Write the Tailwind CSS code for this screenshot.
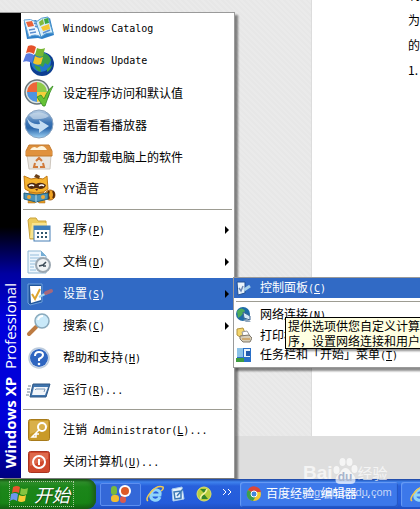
<!DOCTYPE html>
<html lang="zh-CN">
  <head>
    <meta charset="UTF-8" />
    <meta name="viewport" content="width=device-width, initial-scale=1.0" />
    <title>Windows XP</title>
    <script src="https://cdn.jsdelivr.net/npm/@tailwindcss/browser@4"></script>
  </head>
  <body
    class="h-screen flex flex-col overflow-hidden text-[12px] leading-4 text-black font-['Liberation_Sans','Noto_Sans_CJK_SC',sans-serif]"
  >
    <main class="relative flex-1 flex flex-col min-h-0 overflow-hidden bg-[#dedede]">
      <!-- editor page behind the menus -->
      <div class="flex-1 flex min-h-0">
        <div
          class="w-[312px] shrink-0 border-r border-[#dcdcdc] bg-[repeating-linear-gradient(45deg,#e7e7e7_0_2px,#eaeaea_2px_4px)]"
        ></div>
        <div class="flex-1 bg-white pl-24 overflow-hidden whitespace-nowrap leading-[25px] font-['Noto_Sans_CJK_SC',sans-serif]">
          <p class="-mt-[18px]">制,</p>
          <p>为了</p>
          <p>的时</p>
          <p>1.</p>
        </div>
      </div>
      <div class="h-[43px] shrink-0"></div>

      <!-- start menu -->
      <nav
        class="absolute left-0 bottom-px w-[235px] flex bg-white border-t border-r border-[#9a9a9a] shadow-[3px_3px_2px_rgba(0,0,0,0.45)]"
      >
        <div
          class="w-[21px] shrink-0 flex items-end pb-[10px] bg-[linear-gradient(to_bottom,#000_46%,#0000a0_56%,#0000dc_66%,#0000d8_88%,#000080_100%)]"
        >
          <span
            class="rotate-180 [writing-mode:vertical-rl] text-white text-[15px] leading-[21px] whitespace-nowrap font-['Open_Sans',sans-serif]"
          ><b>Windows XP</b>&nbsp; Professional</span>
        </div>

        <div class="flex-1">
          <button class="flex w-full h-8 items-center gap-[6px] text-left">
            <svg class="w-9 h-8 shrink-0" viewBox="0 0 36 32">
              <path d="M3 9L15 7l3 3 11-5 4 17-12 4-4-1-11 1z" fill="#2f80c8" />
              <path d="M3 7Q10 5 15 9L20 24Q14 20 8 24z" fill="#eef7ff" stroke="#66a5d8" />
              <path d="M15 9Q20 4 27 4L32 20Q25 19 20 24z" fill="#d6eefc" stroke="#549bcc" />
              <path d="M5 9l6-1 2 5-6 1z" fill="#e9633b" />
              <path d="M8 17l6-1M9 20l6-1M13 10l2 1M14 13l2 1M22 20l7-3" stroke="#5b8fd0" stroke-width="1.5" />
              <path d="M18 9l4-3 1 5-4 2z" fill="#84b93a" />
              <path d="M23 6l4-1 1 5-4 1z" fill="#3ea83f" />
              <path d="M20 14l8-3 1 5-7 2z" fill="#f5c631" />
            </svg>
            <span class="font-['DejaVu_Sans_Mono',monospace] text-[10px]">Windows Catalog</span>
          </button>
          <button class="flex w-full h-8 items-center gap-[6px] text-left">
            <svg class="w-9 h-8 shrink-0" viewBox="0 0 36 32">
              <circle cx="21" cy="19" r="12" fill="#0e3f92" />
              <circle cx="20" cy="17" r="10" fill="#2277cc" />
              <path d="M22 8q6 1 8 7l-3 5-3-2-2 4-4-2 1-5zM13 20l6 2 1 5q-5-1-7-7zM26 24l5-4q-1 5-5 7z" fill="#3da046" />
              <path d="M7 1q4-2 8 1l-2 7q-4-3-8-1z" fill="#e5512a" />
              <path d="M16 3q4 2 8 0l-2 8q-4 2-8-1z" fill="#78b833" />
              <path d="M5 9q4-2 8 1l-2 8q-5-3-9-1z" fill="#5879df" />
              <path d="M14 11q4 3 8 1l-2 7q-4 2-8-1z" fill="#f4c52b" />
            </svg>
            <span class="font-['DejaVu_Sans_Mono',monospace] text-[10px]">Windows Update</span>
          </button>
          <button class="flex w-full h-8 items-center gap-[6px] text-left">
            <svg class="w-9 h-8 shrink-0" viewBox="0 0 36 32">
              <circle cx="16" cy="15" r="12" fill="#dfe6e4" stroke="#67757a" stroke-width="1.5" />
              <path d="M16 15V5a10 10 0 0 0-10 10z" fill="#ed6639" />
              <path d="M16 15V5a10 10 0 0 1 10 10z" fill="#8fcb4a" />
              <path d="M16 15v10a10 10 0 0 1-10-10z" fill="#4d94e0" />
              <path d="M16 15v10a10 10 0 0 0 10-10z" fill="#f5cf3b" />
              <path d="M16 20l4-2 3 4q4-10 9-13-4 7-8 20h-2z" fill="#66c236" stroke="#328b1d" stroke-width=".8" />
            </svg>
            <span class="font-['Noto_Sans_CJK_SC',sans-serif]">设定程序访问和默认值</span>
          </button>
          <button class="flex w-full h-8 items-center gap-[6px] text-left">
            <svg class="w-9 h-8 shrink-0" viewBox="0 0 36 32">
              <defs>
                <linearGradient id="ball" x2="0" y2="1">
                  <stop stop-color="#b9d0e6" />
                  <stop offset=".45" stop-color="#3c74b4" />
                  <stop offset=".65" stop-color="#2a66ab" />
                  <stop offset="1" stop-color="#9fd3f5" />
                </linearGradient>
              </defs>
              <circle cx="18" cy="15" r="14" fill="url(#ball)" stroke="#8ba4c0" />
              <path d="M6 9Q10 16 19 15L18 11 28 17 18 24 18 20Q8 20 6 9z" fill="#c3dcf2" />
              <path d="M8 6Q18 0 28 7 22 11 12 10z" fill="#d5e2ef" opacity=".6" />
            </svg>
            <span class="font-['Noto_Sans_CJK_SC',sans-serif]">迅雷看看播放器</span>
          </button>
          <button class="flex w-full h-8 items-center gap-[6px] text-left">
            <svg class="w-9 h-8 shrink-0" viewBox="0 0 36 32">
              <path d="M6 14h24l-1 14H8z" fill="#e9e6e1" stroke="#cdc6bd" />
              <path d="M8 4h20l3 6v5H5v-5z" fill="#dc8f3c" stroke="#c47a2c" />
              <path d="M9 9q3-5 7-2 6-5 10 2z" fill="#fff4dc" />
              <path d="M5 10h26v4H5z" fill="#e0913d" />
              <path d="M15 20l3-3 3 3M22 22l1 4h-4M17 26h-4l1-4" fill="none" stroke="#d17a3a" stroke-width="2" />
            </svg>
            <span class="font-['Noto_Sans_CJK_SC',sans-serif]">强力卸载电脑上的软件</span>
          </button>
          <button class="flex w-full h-8 items-center gap-[6px] text-left">
            <svg class="w-9 h-8 shrink-0" viewBox="0 0 36 32">
              <circle cx="29" cy="22" r="5" fill="#f0a423" stroke="#a5651b" />
              <path d="M28 18q-2 4 0 8M32 18q2 4 0 7" stroke="#5b2d0b" stroke-width="2" fill="none" />
              <path d="M8 19h15l1 11h-6l-2-2-2 2H7z" fill="#e69a20" stroke="#a5651b" stroke-width=".5" />
              <path d="M3 3l7 3q6-2 12 0l4-3 1 13q-4 4-11 4T4 16z" fill="#f6b32e" stroke="#c17a17" />
              <path d="M6 12q4-4 9-1 5-3 10 1-1 4-6 4l-4-1-4 1q-4 0-5-4z" fill="#512a12" />
              <path d="M8 13q3-2 5 0M18 13q3-2 5 0" stroke="#fff" stroke-width="1.5" fill="none" />
              <path d="M14 16h3l-1 2z" fill="#6b2d12" />
              <path d="M3 20l12 2 12-2v6l-12 3-12-3z" fill="#4b93b8" stroke="#23617f" />
              <path d="M15 22v7" stroke="#b8dbe8" />
              <circle cx="8" cy="24" r="2" fill="#f0aa35" />
              <circle cx="22" cy="24" r="2" fill="#f0aa35" />
              <path d="M13 4l2-3 4 2-1 3z" fill="#6b421b" />
            </svg>
            <span class="font-['Noto_Sans_CJK_SC',sans-serif]"><span class="font-['DejaVu_Sans_Mono',monospace] text-[10px]">YY</span>语音</span>
          </button>

          <hr class="mt-1 mb-1 mx-[2px] border-[#9d9c92]" />

          <button class="flex w-full h-8 items-center gap-[6px] text-left">
            <svg class="w-9 h-8 shrink-0" viewBox="0 0 36 32">
              <path d="M7 6l2-2h6l2 3h8v18H9z" fill="#eccb5c" stroke="#c8a13c" />
              <path d="M11 9h15v15H9z" fill="#f8e38e" />
              <rect x="13" y="12" width="16" height="15" fill="#fff" stroke="#467eb5" />
              <path d="M13 12h16v4H13z" fill="#3e7fbd" />
              <path d="M16 19h2M20 19h2M24 19h2M16 23h2M20 23h2M24 23h2" stroke="#31576f" stroke-width="2" />
            </svg>
            <span class="flex-1 font-['Noto_Sans_CJK_SC',sans-serif]">程序<span class="font-['DejaVu_Sans_Mono',monospace] text-[10px]">(<u>P</u>)</span></span>
            <svg class="w-1 h-2 mr-[5px]" viewBox="0 0 4 8"><path d="M0 0l4 4-4 4z" /></svg>
          </button>
          <button class="flex w-full h-8 items-center gap-[6px] text-left">
            <svg class="w-9 h-8 shrink-0" viewBox="0 0 36 32">
              <path d="M7 5h13l5 5v17H7z" fill="#edf6fd" stroke="#8eb6d3" />
              <path d="M20 5v5h5z" fill="#75aed6" />
              <path d="M9 9h9M9 12h12M9 15h8M9 18h5M9 21h4M9 24h6" stroke="#94bddb" />
              <circle cx="22" cy="19" r="7" fill="#eff2f4" stroke="#9ba7b1" stroke-width="2" />
              <path d="M18 20l4-1 3-3M22 20h3" stroke="#3b4a56" stroke-width="1.5" fill="none" />
            </svg>
            <span class="flex-1 font-['Noto_Sans_CJK_SC',sans-serif]">文档<span class="font-['DejaVu_Sans_Mono',monospace] text-[10px]">(<u>D</u>)</span></span>
            <svg class="w-1 h-2 mr-[5px]" viewBox="0 0 4 8"><path d="M0 0l4 4-4 4z" /></svg>
          </button>
          <button class="flex w-full h-8 items-center gap-[6px] text-left bg-[#316ac5] text-white">
            <svg class="w-9 h-8 shrink-0" viewBox="0 0 36 32">
              <path d="M7 6h14v18l-12 3-2-2z" fill="#1f559c" stroke="#6fa0dc" />
              <path d="M9 8h11v14l-10 3z" fill="#fff" />
              <path d="M11 16l3 5 5-10" fill="none" stroke="#dda52e" stroke-width="2" />
              <path d="M18 19l8-4" stroke="#9bd0ee" stroke-width="2" />
              <path d="M25 15l5-2" stroke="#a5687c" stroke-width="4" stroke-linecap="round" />
            </svg>
            <span class="flex-1 font-['Noto_Sans_CJK_SC',sans-serif]">设置<span class="font-['DejaVu_Sans_Mono',monospace] text-[10px]">(<u>S</u>)</span></span>
            <svg class="w-1 h-2 mr-[5px]" viewBox="0 0 4 8"><path d="M0 0l4 4-4 4z" /></svg>
          </button>
          <button class="flex w-full h-8 items-center gap-[6px] text-left">
            <svg class="w-9 h-8 shrink-0" viewBox="0 0 36 32">
              <path d="M8 24l7-7" stroke="#bd7b42" stroke-width="4" stroke-linecap="round" />
              <circle cx="21" cy="11" r="7" fill="#c9e9f9" stroke="#8aaabd" stroke-width="1.5" />
              <path d="M17 10q1-4 5-4" stroke="#fff" stroke-width="2" fill="none" />
            </svg>
            <span class="flex-1 font-['Noto_Sans_CJK_SC',sans-serif]">搜索<span class="font-['DejaVu_Sans_Mono',monospace] text-[10px]">(<u>C</u>)</span></span>
            <svg class="w-1 h-2 mr-[5px]" viewBox="0 0 4 8"><path d="M0 0l4 4-4 4z" /></svg>
          </button>
          <button class="flex w-full h-8 items-center gap-[6px] text-left">
            <svg class="w-9 h-8 shrink-0" viewBox="0 0 36 32">
              <circle cx="18" cy="16" r="10" fill="#fff" stroke="#bccbdc" stroke-width="1.5" />
              <circle cx="18" cy="16" r="9" fill="#2f66c0" />
              <path d="M14 14q0-4 4-4t4 3q0 2-4 4v2" fill="none" stroke="#fff" stroke-width="2" />
              <circle cx="18" cy="22" r="1.300" fill="#fff" />
            </svg>
            <span class="font-['Noto_Sans_CJK_SC',sans-serif]">帮助和支持<span class="font-['DejaVu_Sans_Mono',monospace] text-[10px]">(<u>H</u>)</span></span>
          </button>
          <button class="flex w-full h-8 items-center gap-[6px] text-left">
            <svg class="w-9 h-8 shrink-0" viewBox="0 0 36 32">
              <path d="M12 10h17l-4 13H9z" fill="#3f74ad" stroke="#2f5785" stroke-linejoin="round" />
              <path d="M13 13h14l-3 8H11z" fill="#f1f5fa" />
              <path d="M14 16l1-1h9l-1 3" fill="none" stroke="#7d99b8" />
              <path d="M7 12h3M6 15h3M6 18h3M5 21h3" stroke="#6d8195" />
            </svg>
            <span class="font-['Noto_Sans_CJK_SC',sans-serif]">运行<span class="font-['DejaVu_Sans_Mono',monospace] text-[10px]">(<u>R</u>)...</span></span>
          </button>

          <hr class="mt-[3px] mb-1 mx-[2px] border-[#9d9c92]" />

          <button class="flex w-full h-8 items-center gap-[6px] text-left">
            <svg class="w-9 h-8 shrink-0" viewBox="0 0 36 32">
              <rect x="7.500" y="5.500" width="21" height="21" rx="2" fill="#c99a28" stroke="#a87b1b" />
              <path d="M9 7h18v6L9 20z" fill="#d9b04a" />
              <circle cx="21" cy="13" r="4" fill="none" stroke="#fff" stroke-width="2" />
              <path d="M18 16l-7 7h4v-3h3" fill="none" stroke="#fff" stroke-width="1.500" />
            </svg>
            <span class="font-['Noto_Sans_CJK_SC',sans-serif]">注销<span class="font-['DejaVu_Sans_Mono',monospace] text-[10px]"> Administrator(<u>L</u>)...</span></span>
          </button>
          <button class="flex w-full h-8 items-center gap-[6px] text-left">
            <svg class="w-9 h-8 shrink-0" viewBox="0 0 36 32">
              <rect x="7.500" y="5.500" width="21" height="21" rx="2" fill="#cf482c" stroke="#a93420" />
              <path d="M9 7h18v6L9 20z" fill="#de6a4c" />
              <circle cx="18" cy="16" r="6" fill="none" stroke="#fff" stroke-width="2" />
              <path d="M18 13v6" stroke="#fff" stroke-width="2" />
            </svg>
            <span class="font-['Noto_Sans_CJK_SC',sans-serif]">关闭计算机<span class="font-['DejaVu_Sans_Mono',monospace] text-[10px]">(<u>U</u>)...</span></span>
          </button>
        </div>
      </nav>

      <!-- settings submenu -->
      <nav
        class="absolute left-[233px] right-0 top-[277px] bg-white border border-r-0 border-[#9a9a9a] pb-[2px] shadow-[3px_3px_2px_rgba(0,0,0,0.45)] font-['Noto_Sans_CJK_SC',sans-serif]"
      >
        <button class="flex w-full h-5 items-center gap-2 pl-[2px] text-left bg-[#316ac5] text-white">
          <svg class="size-4 shrink-0" viewBox="0 0 16 16">
            <path d="M1 2h8v11l-7 2z" fill="#eaf4fc" stroke="#214f91" />
            <path d="M3 8l2 3 2-5" fill="none" stroke="#6a86b4" stroke-width="1.500" />
            <path d="M8 10l6-4" stroke="#a7d0ea" stroke-width="3" />
          </svg>
          <span>控制面板<span class="font-['DejaVu_Sans_Mono',monospace] text-[10px]">(<u>C</u>)</span></span>
        </button>
        <hr class="my-[3px] ml-[2px] border-[#9d9c92]" />
        <button class="flex w-full h-5 items-center gap-2 pl-[2px] text-left">
          <svg class="size-4 shrink-0" viewBox="0 0 16 16">
            <circle cx="7" cy="7" r="7" fill="#1f6ba6" />
            <path d="M1 4q5-5 8 0L5 9 2 11z" fill="#4dac58" />
            <path d="M7 5l7 4v4l-6-2z" fill="#d5e9f7" stroke="#3f6692" />
            <path d="M7 13l4-1 4 3h-5z" fill="#8ba3bb" />
          </svg>
          <span>网络连接<span class="font-['DejaVu_Sans_Mono',monospace] text-[10px]">(<u>N</u>)</span></span>
        </button>
        <button class="flex w-full h-5 items-center gap-2 pl-[2px] text-left">
          <svg class="size-4 shrink-0" viewBox="0 0 16 16">
            <path d="M1 2l6-1 2 5-5 4-3-2z" fill="#f3d56c" stroke="#b3933d" />
            <path d="M6 5l5-1 3 5H7z" fill="#fff" stroke="#999" />
            <path d="M4 9l9-1 3 3-2 4H7l-3-3z" fill="#d6cdb8" stroke="#81786a" />
            <path d="M6 12h8" stroke="#c8872d" />
          </svg>
          <span>打印机</span>
        </button>
        <button class="flex w-full h-5 items-center gap-2 pl-[2px] text-left">
          <svg class="size-4 shrink-0" viewBox="0 0 16 16">
            <path d="M1 1h14v14H1z" fill="#2a70c8" />
            <path d="M1 1h6v9H1z" fill="#8bc2e8" />
            <path d="M8 2h6v8H8z" fill="#e9f3fb" />
            <path d="M10 4h4v5h-4z" fill="#225aab" />
            <path d="M0 11h8v4H0z" fill="#3e9c40" />
          </svg>
          <span>任务栏和「开始」菜单<span class="font-['DejaVu_Sans_Mono',monospace] text-[10px]">(<u>T</u>)</span></span>
        </button>
      </nav>

      <div
        role="tooltip"
        class="absolute left-[285px] right-0 top-[317px] overflow-hidden border border-r-0 border-black bg-[#ffffe1] pl-[2px] leading-[15px] whitespace-nowrap shadow-[2px_2px_2px_rgba(0,0,0,0.45)] font-['Noto_Sans_CJK_SC',sans-serif]"
      >
        提供选项供您自定义计算<br />序，设置网络连接和用户
      </div>
    </main>

    <!-- taskbar -->
    <footer
      class="h-[30px] shrink-0 flex items-center overflow-hidden bg-[linear-gradient(to_bottom,#1c44a0_0,#3f83ee_3px,#2860dc_7px,#245cdb_80%,#1f4fc0)] text-white whitespace-nowrap"
    >
      <button
        class="w-24 h-full shrink-0 flex items-center rounded-r-[9px] pl-[9px] bg-[linear-gradient(to_bottom,#10500c_0,#2f8f2b_3px,#1c861a_8px,#188416_80%,#126310)] shadow-[inset_-3px_0_4px_#1d5a1a]"
      >
        <span class="h-[26px] w-[65px] flex items-center gap-[6px] border border-dotted border-[#a9c99c]">
          <svg class="size-[18px] shrink-0" viewBox="0 0 18 18">
            <path d="M3 2q4-2 7 0L9 8Q5 6 2 8z" fill="#e8562e" />
            <path d="M11 3q3 2 7 0l-1 6q-4 2-7 0z" fill="#86c440" />
            <path d="M1 9q4-2 7 0l-1 7q-4-3-7 0z" fill="#6d97ee" />
            <path d="M9 10q4 2 7 0l-1 6q-4 2-7 0z" fill="#f7cb35" />
          </svg>
          <span class="text-[18px] leading-6 italic font-['Noto_Sans_CJK_SC',sans-serif] [text-shadow:1px_1px_1px_#1c4b19]">开始</span>
        </span>
      </button>
      <button class="ml-1 w-[41px] h-[23px] shrink-0 flex items-center justify-center rounded-[2px] border border-[#5d8ff0] bg-[#3468d8]" aria-label="浏览器">
        <svg class="w-[22px] h-5" viewBox="0 0 22 20">
          <rect x="1" y="2" width="6" height="9" rx="3" fill="#79ba3c" />
          <rect x="1" y="11" width="8" height="7" rx="3" fill="#f2bd2f" />
          <rect x="10" y="12" width="6" height="7" rx="3" fill="#d95a4f" />
          <circle cx="15" cy="7" r="6" fill="#fff" />
          <circle cx="15" cy="7" r="4" fill="#dd5a27" />
        </svg>
      </button>
      <div class="ml-[5px] flex items-center gap-[6px]">
        <button aria-label="Internet Explorer">
          <svg class="block size-[18px]" viewBox="0 0 18 18">
            <path d="M14 12q-2 4-6 3-4-1-3-6 2-5 6-4 4 1 3 5H6" fill="none" stroke="#8fd4fa" stroke-width="3" />
            <path d="M2 16Q-1 14 5 7T17 2q1 2-2 4" fill="none" stroke="#f1c950" stroke-width="1.500" />
          </svg>
        </button>
        <button aria-label="显示桌面">
          <svg class="block size-4" viewBox="0 0 16 16">
            <path d="M2 3l10-2 2 12-11 2z" fill="#e8f3fc" stroke="#a8cdf0" />
            <path d="M4 6l7-1v7l-6 1zM7 10l6-7" fill="none" stroke="#3b78b5" stroke-width="1.500" />
          </svg>
        </button>
        <button aria-label="安全浏览器">
          <svg class="ml-1 block size-4" viewBox="0 0 16 16">
            <circle cx="8" cy="8" r="7" fill="#b9cf3c" stroke="#dfe06a" />
            <path d="M4 3h7L8 7zM8 8l4 5H4z" fill="#34852a" />
            <path d="M11 3q-1 4-5 6-2 2-1 4" fill="none" stroke="#f4f2a1" stroke-width="1.500" />
          </svg>
        </button>
      </div>
      <button class="ml-[10px] w-[10px] shrink-0" aria-label="更多">
        <svg class="block w-[10px] h-2 mb-1" viewBox="0 0 10 8">
          <path d="M1 1l3 3-3 3M6 1l3 3-3 3" fill="none" stroke="#fff" stroke-width="1" />
        </svg>
      </button>
      <button class="ml-2 w-[158px] h-[25px] shrink-0 flex items-center gap-1 pl-[6px] rounded-[3px] bg-[#3c78ea] shadow-[inset_1px_1px_1px_#6a9df5,inset_-1px_-1px_1px_#2355c2]">
        <svg class="size-4 shrink-0" viewBox="0 0 16 16">
          <circle cx="8" cy="8" r="7" fill="#f2c733" />
          <path d="M8 8L2 4a7 7 0 0 1 13 2H8z" fill="#dc4637" />
          <path d="M8 8L2 4a7 7 0 0 0 5 11l3-5z" fill="#3d9e4d" />
          <circle cx="8" cy="8" r="3" fill="#4486dc" stroke="#fff" />
        </svg>
        <span class="font-['Noto_Sans_CJK_SC',sans-serif]">百度经验_编辑器 <span class="font-['DejaVu_Sans_Mono',monospace] text-[10px]">...</span></span>
      </button>
      <button class="ml-[3px] flex-1 min-w-0 h-[25px] overflow-hidden pl-[9px] rounded-l-[3px] bg-[#3c78ea] shadow-[inset_1px_1px_1px_#6a9df5]" aria-label="Internet Explorer">
        <svg class="block w-[18px] max-w-none h-[18px]" viewBox="0 0 18 18">
          <path d="M14 12q-2 4-6 3-4-1-3-6 2-5 6-4 4 1 3 5H6" fill="none" stroke="#8fd4fa" stroke-width="3" />
          <path d="M2 16Q-1 14 5 7T17 2q1 2-2 4" fill="none" stroke="#f1c950" stroke-width="1.500" />
        </svg>
      </button>
    </footer>

    <!-- watermark -->
    <div class="pointer-events-none absolute right-[29px] bottom-[10px] w-[88px] text-white/70">
      <div class="flex items-end text-[19px] leading-6 font-bold">
        <span>Bai</span>
        <span class="relative">
          <svg class="block w-[25px] h-7" viewBox="0 0 24 28" fill="currentColor">
            <ellipse cx="3" cy="13" rx="3" ry="4" />
            <ellipse cx="9" cy="5" rx="3" ry="4" />
            <ellipse cx="16" cy="5" rx="3" ry="4" />
            <ellipse cx="21" cy="12" rx="3" ry="4" />
            <path d="M12 11q3 0 5 4 5 4 5 8t-5 4H7q-5 0-5-4t5-8q2-4 5-4z" />
          </svg>
          <span class="absolute inset-x-0 bottom-0 text-center text-[12px] leading-4 text-[#a8b4cc]">du</span>
        </span>
        <span class="text-[15px] font-normal font-['Noto_Sans_CJK_SC',sans-serif]">经验</span>
      </div>
      <div class="text-[11px] leading-[14px]">jingyan.baidu.com</div>
    </div>
  </body>
</html>
